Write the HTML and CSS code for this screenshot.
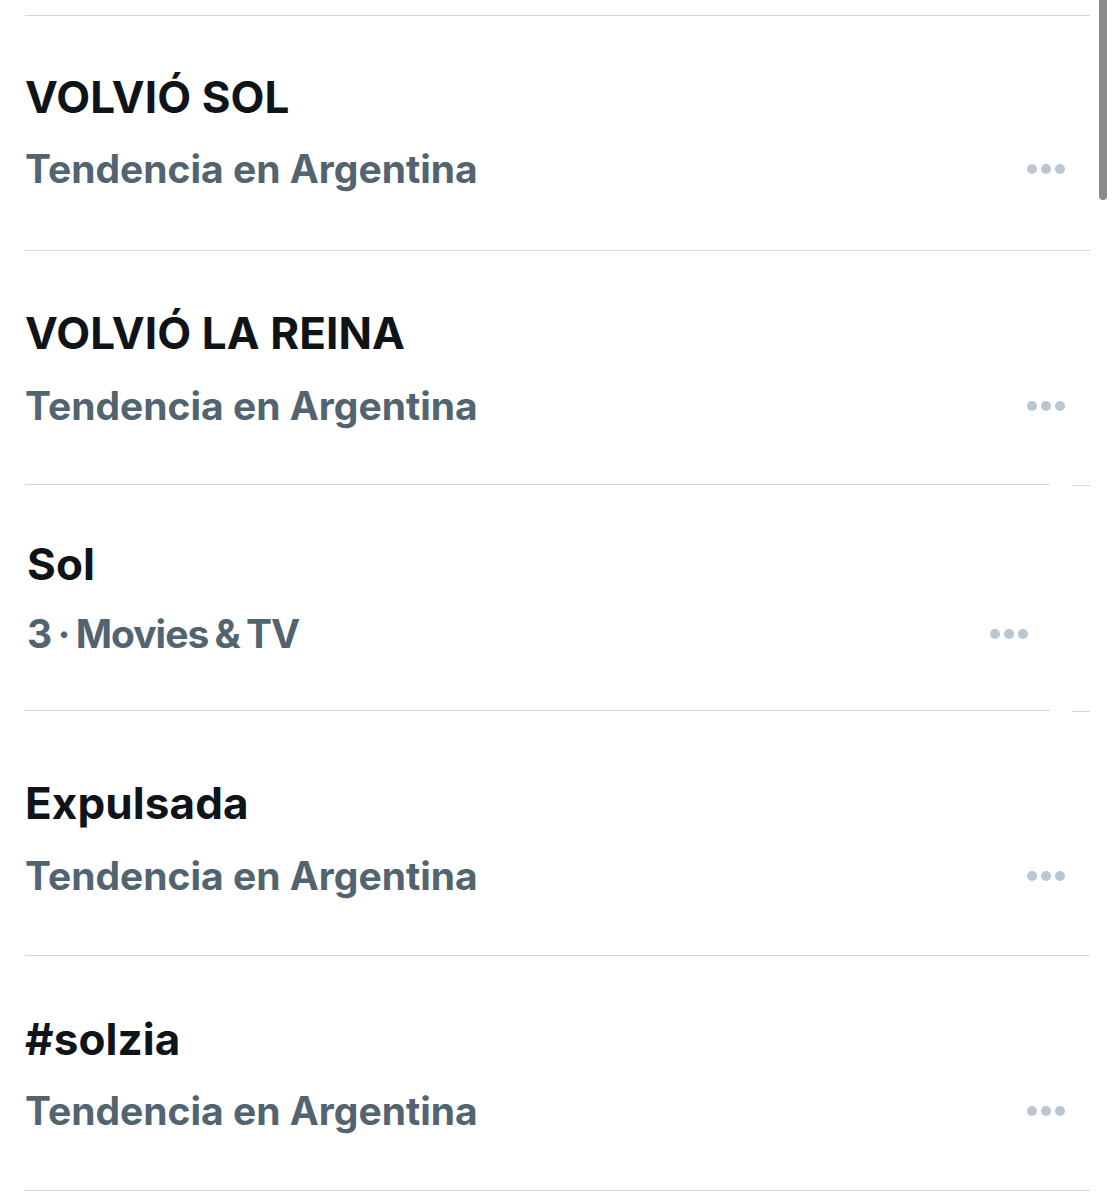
FILE: index.html
```html
<!DOCTYPE html>
<html lang="es">
  <head>
  <meta charset="utf-8">
  <link rel="stylesheet" href="styles.css">
  </head>
  <body>
    <div class="scrollbar"></div>
    <div class="list">
      <div class="sep"></div>
      <div class="trend first">
        <div class="topic">VOLVIÓ SOL</div>
        <div class="meta">
          <span>Tendencia en Argentina</span>
          <svg class="more" width="38" height="10" viewBox="0 0 38 10"><circle cx="5" cy="5" r="5"/><circle cx="19" cy="5" r="5"/><circle cx="33" cy="5" r="5"/></svg>
        </div>
      </div>
      <div class="sep"></div>
      <div class="trend second">
        <div class="topic">VOLVIÓ LA REINA</div>
        <div class="meta">
          <span>Tendencia en Argentina</span>
          <svg class="more" width="38" height="10" viewBox="0 0 38 10"><circle cx="5" cy="5" r="5"/><circle cx="19" cy="5" r="5"/><circle cx="33" cy="5" r="5"/></svg>
        </div>
      </div>
      <div class="sep split"><i></i><i></i></div>
      <div class="trend narrow">
        <div class="topic">Sol</div>
        <div class="meta">
          <span class="tight">3 · Movies &amp; TV</span>
          <svg class="more" width="38" height="10" viewBox="0 0 38 10"><circle cx="5" cy="5" r="5"/><circle cx="19" cy="5" r="5"/><circle cx="33" cy="5" r="5"/></svg>
        </div>
      </div>
      <div class="sep split"><i></i><i></i></div>
      <div class="trend fourth">
        <div class="topic">Expulsada</div>
        <div class="meta">
          <span>Tendencia en Argentina</span>
          <svg class="more" width="38" height="10" viewBox="0 0 38 10"><circle cx="5" cy="5" r="5"/><circle cx="19" cy="5" r="5"/><circle cx="33" cy="5" r="5"/></svg>
        </div>
      </div>
      <div class="sep"></div>
      <div class="trend fifth">
        <div class="topic">#solzia</div>
        <div class="meta">
          <span>Tendencia en Argentina</span>
          <svg class="more" width="38" height="10" viewBox="0 0 38 10"><circle cx="5" cy="5" r="5"/><circle cx="19" cy="5" r="5"/><circle cx="33" cy="5" r="5"/></svg>
        </div>
      </div>
      <div class="sep"></div>
    </div>
  </body>
</html>
```

FILE: styles.css
```css
html, body { padding: 0; margin: 0; background: #fff; }
body { font-family: Inter, "Liberation Sans", sans-serif; color: #0f1419; }
.list { padding: 15px 26px 0 25px; }
.scrollbar {
  position: absolute; top: 0; left: 1099px;
  width: 8px; height: 200px; background: #8a8a8a;
  border-radius: 0 0 4px 4px;
}
.sep { height: 1px; background: #d6d6d6; }
.sep.split { display: flex; justify-content: space-between; background: none; }
.sep.split i { display: block; height: 1px; background: #d6d6d6; }
.sep.split i:first-child { width: 1025px; }
.sep.split i:last-child { width: 18px; margin-top: 1px; }
.trend { display: flex; flex-direction: column; gap: 24px; padding: 57px 25px 57px 0; }
.topic { font-size: 44px; line-height: 48px; font-weight: 700; letter-spacing: 0.1px; }
.meta {
  display: flex; justify-content: space-between; align-items: center;
  font-size: 39px; line-height: 48px; font-weight: 700; color: #536471;
}
.tight { letter-spacing: -1px; word-spacing: -2px; }
.more { fill: #bac6d0; }
.first { padding: 57px 25px 57px 0; }
.second { padding: 58px 25px 54px 0; gap: 25px; }
.narrow { padding: 55px 62px 52px 2px; gap: 22px; }
.fourth { padding: 68px 25px 55px 0; gap: 25px; }
.fifth { padding: 59px 25px 55px 0; }
```
